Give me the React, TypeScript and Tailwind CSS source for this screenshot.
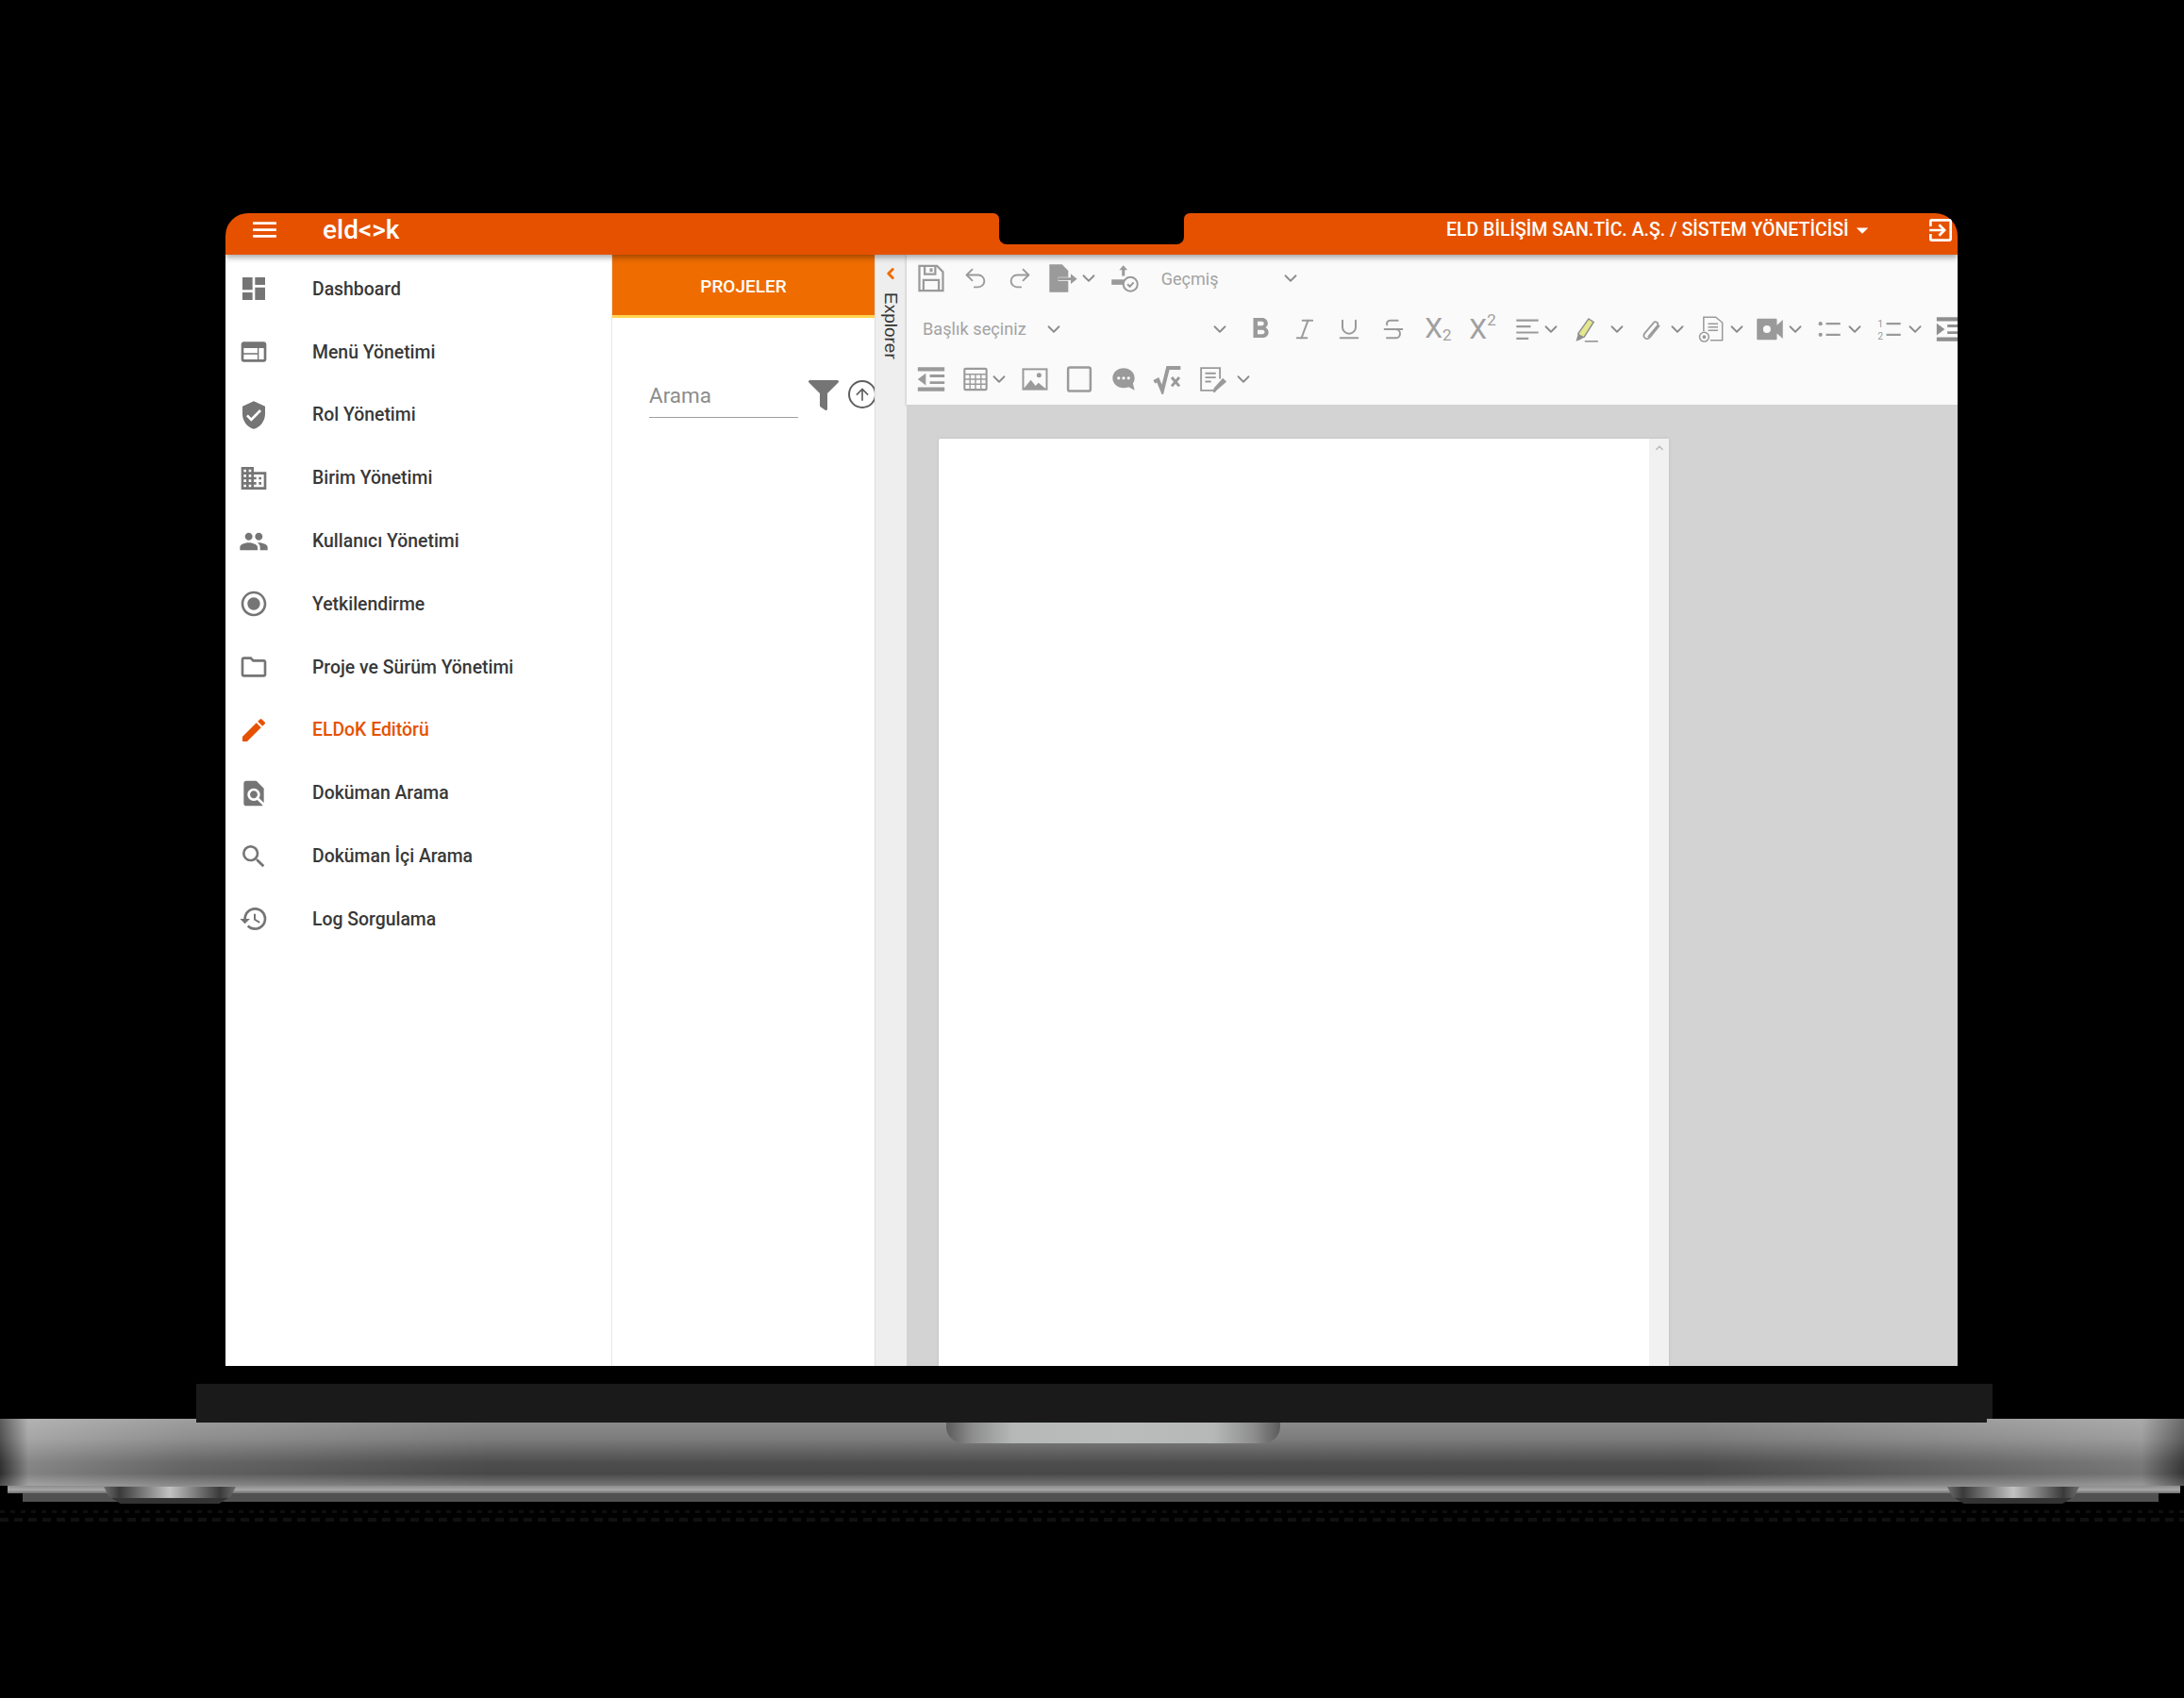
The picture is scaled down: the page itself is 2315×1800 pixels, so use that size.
import React from 'react';
import {
  MdDashboard, MdWeb, MdVerifiedUser, MdDomain, MdPeople, MdRadioButtonChecked, MdOutlineFolder,
  MdEdit, MdFindInPage, MdSearch, MdHistory, MdMenu, MdOutlineExitToApp, MdArrowDropDown,
  MdFormatBold, MdArrowUpward, MdExpandLess,
} from 'react-icons/md';
import { FaFilter } from 'react-icons/fa';
import { ChevronDown, ChevronLeft, Italic, Redo2, Strikethrough, Underline, Undo2 } from 'lucide-react';

const MENU = [
  { label: 'Dashboard', icon: MdDashboard },
  { label: 'Menü Yönetimi', icon: MdWeb },
  { label: 'Rol Yönetimi', icon: MdVerifiedUser },
  { label: 'Birim Yönetimi', icon: MdDomain },
  { label: 'Kullanıcı Yönetimi', icon: MdPeople },
  { label: 'Yetkilendirme', icon: MdRadioButtonChecked },
  { label: 'Proje ve Sürüm Yönetimi', icon: MdOutlineFolder },
  { label: 'ELDoK Editörü', icon: MdEdit, active: true },
  { label: 'Doküman Arama', icon: MdFindInPage },
  { label: 'Doküman İçi Arama', icon: MdSearch },
  { label: 'Log Sorgulama', icon: MdHistory },
];

const Chev = () => <ChevronDown size={22} strokeWidth={2} className="shrink-0 text-[#8c8c8c]" />;

// toolbar glyphs the icon packages don't have
const SaveIcon = () => (
  <svg width="30" height="30" viewBox="0 0 24 24" fill="none" stroke="currentColor" strokeWidth="1.800">
    <path d="M2 1.500h15l5 5v16H2z" />
    <path d="M6.500 1.500v7h9v-7M5.500 22.500v-9h13v9" />
    <path d="M12 3.500v3" strokeWidth="2.400" />
  </svg>
);

const DocArrowIcon = () => (
  <svg width="32" height="32" viewBox="0 0 24 24" fill="currentColor">
    <path d="M1 1h10l5 5v5H8v3h8v9H1z" />
    <path d="M8 11.500h10V8.500l5 4-5 4v-3H8z" />
  </svg>
);

const PublishIcon = () => (
  <svg width="30" height="32" viewBox="0 0 24 24" fill="none" stroke="currentColor" strokeWidth="1.600">
    <path d="M11 1l-3.500 4h2.300v5h2.400V5h2.300z" fill="currentColor" stroke="none" />
    <path d="M1 13h13v4.500H1z" fill="currentColor" stroke="none" />
    <circle cx="17" cy="17" r="6" fill="#fafafa" />
    <path d="M14.500 17l2 2 3.200-3.500" />
  </svg>
);

const AlignIcon = () => (
  <svg width="28" height="28" viewBox="0 0 24 24" stroke="currentColor" strokeWidth="1.800">
    <path d="M2 4h20M2 9.500h13M2 15h20M2 20.500h11" />
  </svg>
);

const HighlightIcon = () => (
  <svg width="28" height="30" viewBox="0 0 24 24">
    <path d="M5 16L14.500 2.500l4.500 3L10.500 19l-3.500 1z" fill="#e4e88e" stroke="#8f8f8f" strokeWidth="1.300" />
    <path d="M5 16l5.500 3-3.500 2.500L3 23z" fill="#8f8f8f" />
    <path d="M11 23h12" stroke="#8f8f8f" strokeWidth="1.300" />
  </svg>
);

const LinkIcon = () => (
  <svg width="26" height="28" viewBox="0 0 24 24" fill="none" stroke="currentColor" strokeWidth="1.600">
    <path d="M9 20l8-12c1.500-2.500-2.500-5-4-2.500L5.500 16.500C3 20.500 8 24 11 20l8-12.500" transform="rotate(6 12 12)" />
  </svg>
);

const DocPlusIcon = () => (
  <svg width="28" height="32" viewBox="0 0 24 24" fill="none" stroke="currentColor" strokeWidth="1.300">
    <path d="M5 14V1h11l6 5v16H11" />
    <path d="M9 7h9M9 10h9M9 13h9" />
    <circle cx="5.500" cy="19" r="4.200" />
    <circle cx="5.500" cy="19" r="1" fill="currentColor" />
  </svg>
);

const VideoIcon = () => (
  <svg width="32" height="30" viewBox="0 0 24 24">
    <path d="M2 3h15c.6 0 1 .4 1 1v4.500l5-4.500v16l-5-4.500V20c0 .6-.4 1-1 1H2c-.6 0-1-.4-1-1V4c0-.6.4-1 1-1z" fill="currentColor" />
    <circle cx="9.500" cy="12" r="3.200" fill="#fafafa" />
  </svg>
);

const BulletIcon = () => (
  <svg width="28" height="28" viewBox="0 0 24 24" fill="currentColor" stroke="currentColor">
    <circle cx="4" cy="7" r="1.800" stroke="none" />
    <circle cx="4" cy="17" r="1.800" stroke="none" />
    <path d="M9 7h13M9 17h13" strokeWidth="1.800" />
  </svg>
);

const NumberIcon = () => (
  <svg width="28" height="28" viewBox="0 0 24 24" fill="currentColor">
    <text x="1" y="10" fontSize="9" fontFamily="Roboto, sans-serif">1</text>
    <text x="1" y="21" fontSize="9" fontFamily="Roboto, sans-serif">2</text>
    <path d="M9 7h13M9 17h13" stroke="currentColor" strokeWidth="1.800" />
  </svg>
);

const IndentIcon = ({ outdent }: { outdent?: boolean }) => (
  <svg width="34" height="34" viewBox="0 0 24 24" fill="currentColor">
    <path d="M2 3h20v3H2zM2 18h20v3H2z" />
    {outdent ? (
      <path d="M11 8.500h11v2H11zM11 13.500h11v2H11zM2 12l6-4.500v9z" />
    ) : (
      <path d="M2 7.500l6 4.500-6 4.500zM10 8.500h12v2H10zM10 13.500h12v2H10z" />
    )}
  </svg>
);

const TableIcon = () => (
  <svg width="28" height="30" viewBox="0 0 24 24" fill="none" stroke="currentColor" strokeWidth="1.200">
    <rect x="2" y="2.500" width="20" height="19" rx="1" strokeWidth="1.800" />
    <path d="M2 7.500h20M2 12h20M2 16.500h20M7 7.500v14M12 7.500v14M17 7.500v14" />
  </svg>
);

const ImageIcon = () => (
  <svg width="30" height="30" viewBox="0 0 24 24" stroke="currentColor" strokeWidth="1.600" fill="none">
    <rect x="2" y="3.500" width="20" height="17" />
    <circle cx="15.500" cy="8.500" r="2" fill="currentColor" stroke="none" />
    <path d="M2.500 20l6-7.500 4 5 2.500-2.500 6 5z" fill="currentColor" stroke="none" />
  </svg>
);

const SquareIcon = () => (
  <svg width="30" height="30" viewBox="0 0 24 24" fill="none" stroke="currentColor" strokeWidth="2">
    <rect x="2.500" y="2" width="19" height="20" rx="1.500" />
  </svg>
);

const CommentIcon = () => (
  <svg width="28" height="28" viewBox="0 0 24 24" fill="currentColor">
    <path d="M12 2c5.500 0 10 3.800 10 9 0 1.800-.5 3.400-1.500 4.800L22 22l-5.500-3c-1.400.6-2.900 1-4.500 1C6.500 20 2 16 2 11s4.500-9 10-9z" />
    <circle cx="7.500" cy="11" r="1.400" fill="#fafafa" />
    <circle cx="12" cy="11" r="1.400" fill="#fafafa" />
    <circle cx="16.500" cy="11" r="1.400" fill="#fafafa" />
  </svg>
);

const SqrtIcon = () => (
  <svg width="34" height="32" viewBox="0 0 24 24" fill="none" stroke="currentColor" strokeWidth="3">
    <path d="M1 14l3-1.500 3.500 8.500L12 3h10" />
    <path d="M15 10.500l6 7M21 10.500l-6 7" strokeWidth="2.200" />
  </svg>
);

const NotesIcon = () => (
  <svg width="30" height="30" viewBox="0 0 24 24" fill="none" stroke="currentColor" strokeWidth="1.500">
    <path d="M14 21.500H2.500v-19h16v9" />
    <path d="M6 7h9M6 10.500h9M6 14h5" />
    <path d="M15 21l-1.500 2 .5-3 7-8 2 2z" fill="currentColor" />
  </svg>
);

const TextIcon = ({ sub, sup }: { sub?: boolean; sup?: boolean }) => (
  <span className="flex items-start text-[30px] font-normal leading-none text-[#a0a0a0]">
    X
    {sub && <span className="mt-[14px] text-[17px]">2</span>}
    {sup && <span className="mt-[-3px] text-[17px]">2</span>}
  </span>
);

const Btn = ({ children }: { children: React.ReactNode }) => (
  <div className="flex h-full w-[47.200px] shrink-0 items-center justify-center text-[#9a9a9a]">{children}</div>
);

const Toolbar = () => (
  <div className="flex h-[159px] shrink-0 flex-col overflow-hidden bg-[#fafafa] shadow-[0_1px_3px_rgba(0,0,0,0.25)]">
    <div className="flex h-[50px] shrink-0 items-center pl-[2px]">
      <Btn><SaveIcon /></Btn>
      <Btn><Undo2 size={28} strokeWidth={1.600} /></Btn>
      <Btn><Redo2 size={28} strokeWidth={1.600} /></Btn>
      <div className="flex h-full w-[64px] shrink-0 items-center pl-[6px] text-[#9a9a9a]"><DocArrowIcon /><Chev /></div>
      <Btn><PublishIcon /></Btn>
      <span className="ml-[15px] w-[126px] shrink-0 text-[18px] text-[#a3a3a3]">Geçmiş</span>
      <Chev />
    </div>
    <div className="flex h-[57px] shrink-0 items-center pl-[17px]">
      <span className="w-[128px] shrink-0 text-[18.200px] text-[#a3a3a3]">Başlık seçiniz</span>
      <Chev />
      <span className="w-[154px] shrink-0" />
      <Chev />
      <span className="w-[8px] shrink-0" />
      <Btn><MdFormatBold size={36} /></Btn>
      <Btn><Italic size={28} strokeWidth={1.700} /></Btn>
      <Btn><Underline size={28} strokeWidth={1.700} /></Btn>
      <Btn><Strikethrough size={28} strokeWidth={1.700} /></Btn>
      <Btn><TextIcon sub /></Btn>
      <Btn><TextIcon sup /></Btn>
      <div className="flex h-full w-[62px] shrink-0 items-center pl-[10px] text-[#9a9a9a]"><AlignIcon /><Chev /></div>
      <div className="flex h-full w-[70px] shrink-0 items-center gap-[8px] pl-[10px] text-[#9a9a9a]"><HighlightIcon /><Chev /></div>
      <div className="flex h-full w-[64px] shrink-0 items-center gap-[3px] pl-[11px] text-[#9a9a9a]"><LinkIcon /><Chev /></div>
      <div className="flex h-full w-[62px] shrink-0 items-center gap-[2px] pl-[9px] text-[#9a9a9a]"><DocPlusIcon /><Chev /></div>
      <div className="flex h-full w-[63px] shrink-0 items-center pl-[7px] text-[#9a9a9a]"><VideoIcon /><Chev /></div>
      <div className="flex h-full w-[64px] shrink-0 items-center gap-[2px] pl-[9px] text-[#9a9a9a]"><BulletIcon /><Chev /></div>
      <div className="flex h-full w-[62px] shrink-0 items-center gap-[2px] pl-[9px] text-[#9a9a9a]"><NumberIcon /><Chev /></div>
      <div className="flex h-full shrink-0 items-center pl-[8px] text-[#8f8f8f]"><IndentIcon /></div>
    </div>
    <div className="flex h-[50px] shrink-0 items-center pl-[2px]">
      <Btn><IndentIcon outdent /></Btn>
      <div className="flex h-full w-[69px] shrink-0 items-center pl-[10px] text-[#9a9a9a]"><TableIcon /><Chev /></div>
      <div className="flex h-full w-[36px] shrink-0 items-center justify-center text-[#9a9a9a]"><ImageIcon /></div>
      <span className="w-[5px] shrink-0" />
      <Btn><SquareIcon /></Btn>
      <Btn><CommentIcon /></Btn>
      <Btn><SqrtIcon /></Btn>
      <div className="flex h-full shrink-0 items-center gap-[7px] pl-[8px] text-[#9a9a9a]"><NotesIcon /><Chev /></div>
    </div>
  </div>
);

const Sidebar = () => (
  <aside className="h-full w-[410px] shrink-0 border-r border-[#e8e8e8] bg-white pt-[3px]">
    {MENU.map(item => {
      const Icon = item.icon;
      return (
        <div key={item.label} className="flex h-[66.800px] items-center pl-[14px]">
          <Icon size={32} className={item.active ? 'text-[#e65100]' : 'text-[#757575]'} />
          <span className={`ml-[46px] text-[19.400px] font-medium ${item.active ? 'text-[#e65100]' : 'text-[#383838]'}`}>{item.label}</span>
        </div>
      );
    })}
  </aside>
);

const ProjectPanel = () => (
  <section className="h-full w-[278px] shrink-0 bg-white">
    <div className="flex h-[67px] items-center justify-center border-b-[3px] border-[#ffd54f] bg-[#ef6c00] pt-[4px] text-[19px] font-medium text-white">
      PROJELER
    </div>
    <div className="mt-[65px] flex items-start pl-[39px]">
      <div className="h-[41px] w-[158px] shrink-0 border-b border-[#9e9e9e] pt-[1px] text-[22.500px] text-[#8c8c8c]">Arama</div>
      <FaFilter size={32} className="ml-[11px] mt-[1px] shrink-0 text-[#757575]" />
      <span className="ml-[10px] mt-[1px] flex h-[30px] w-[30px] shrink-0 items-center justify-center rounded-full border-2 border-[#5f5f5f] text-[#5f5f5f]">
        <MdArrowUpward size={20} />
      </span>
    </div>
  </section>
);

const ExplorerTab = () => (
  <div className="flex h-full w-[34px] shrink-0 flex-col items-center border-l border-[#dddddd] bg-[#eeeeee] pt-[11px] pr-[2px]">
    <ChevronLeft size={18} strokeWidth={4} className="text-[#ef6c00]" />
    <span className="mt-[11px] font-[Liberation_Sans,sans-serif] text-[19px] text-[#333333] [writing-mode:vertical-rl]">Explorer</span>
  </div>
);

const Editor = () => (
  <div className="flex h-full min-w-0 flex-1 flex-col">
    <Toolbar />
    <div className="min-h-0 flex-1 overflow-hidden bg-[#d3d3d3] pl-[34px] pt-[36px]">
      <div className="flex h-full w-[774px] justify-end rounded-t-[2px] bg-white shadow-[0_0_3px_rgba(0,0,0,0.12)]">
        <div className="flex h-full w-[21px] justify-center bg-[#f1f1f1]">
          <MdExpandLess size={16} className="mt-[2px] text-[#b5b5b5]" />
        </div>
      </div>
    </div>
  </div>
);

const Header = () => (
  <header className="relative z-10 flex h-[44px] text-white shadow-[0_3px_6px_rgba(0,0,0,0.35)]">
    <div className="flex w-[820px] items-center rounded-tl-[24px] rounded-tr-[6px] bg-[#e65100] pb-[9px] pl-[25px]">
      <MdMenu size={33} />
      <span className="ml-[45px] text-[28px] font-medium leading-none">eld&lt;&gt;k</span>
    </div>
    <div className="w-[196px] bg-[#e65100]">
      <div className="h-[33px] rounded-b-[8px] bg-black" />
    </div>
    <div className="flex flex-1 items-center rounded-tl-[6px] rounded-tr-[24px] bg-[#e65100] pb-[9px] pl-[278px]">
      <span className="whitespace-nowrap text-[19.500px] font-medium">ELD BİLİŞİM SAN.TİC. A.Ş. / SİSTEM YÖNETİCİSİ</span>
      <MdArrowDropDown size={30} className="ml-[-1px]" />
      <MdOutlineExitToApp size={32} className="ml-[52px]" />
    </div>
  </header>
);

const Foot = ({ className }: { className: string }) => (
  <div className={`absolute top-[-7px] h-[18px] w-[140px] bg-[linear-gradient(180deg,transparent_68%,#333333_68%),linear-gradient(90deg,#6d6d6d,#3a3a3a_12%,#7a7a7a_30%,#c2c2c2_50%,#7a7a7a_70%,#3a3a3a_88%,#6d6d6d)] [clip-path:polygon(0_0,100%_0,96%_60%,87%_100%,13%_100%,4%_60%)] ${className}`} />
);

const LaptopBase = () => (
  <div className="relative mt-[56px]">
    {/* hinge strip and notch sit over the silver body */}
    <div className="absolute left-[208px] top-[-37px] z-10 h-[37px] w-[1904px] bg-[#1a1a1a]" />
    <div className="absolute left-[208px] top-0 z-10 h-[4px] w-[1898px] bg-[#1a1a1a]" />
    <div className="absolute left-[1003px] top-[4px] z-10 h-[22px] w-[354px] rounded-b-[18px] bg-[linear-gradient(90deg,#5c5c5c,#8e8e8e_8%,#b6b8b8_20%,#bbbdbd_50%,#b6b8b8_80%,#8e8e8e_92%,#5c5c5c)]" />
    <div className="h-[71px] bg-[linear-gradient(90deg,rgba(0,0,0,0.35)_0,rgba(255,255,255,0.32)_30px,rgba(255,255,255,0.14)_200px,transparent_520px,transparent_1800px,rgba(255,255,255,0.12)_2050px,rgba(255,255,255,0.25)_2270px,rgba(0,0,0,0.25)_100%),linear-gradient(180deg,#8e8e8e,#7c7c7c_30%,#4e4e4e_65%,#484848_82%,#787878_100%)]" />
    <div className="ml-[8px] mr-[4px] h-[8px] bg-[linear-gradient(180deg,#8c8c8c,#a6a6a6_55%,#6e6e6e)]" />
    <div className="relative ml-[24px] mr-[27px] h-[9px] bg-[#505050]">
      <Foot className="left-[86px]" />
      <Foot className="left-[2040px]" />
    </div>
    <div className="mt-[9px] h-[3px] bg-[repeating-linear-gradient(90deg,#0f0f0f_0,#0f0f0f_5px,transparent_5px,transparent_11px)]" />
    <div className="mt-[5px] h-[4px] bg-[repeating-linear-gradient(90deg,#101010_0,#101010_9px,transparent_9px,transparent_15px)]" />
  </div>
);

const App: React.FC = () => (
  <div className="h-[1800px] overflow-hidden bg-black pt-[226px] font-[Roboto,sans-serif]">
    <div className="ml-[239px] flex h-[1222px] w-[1836px] flex-col">
      <Header />
      <div className="flex min-h-0 flex-1">
        <Sidebar />
        <ProjectPanel />
        <ExplorerTab />
        <Editor />
      </div>
    </div>
    <LaptopBase />
  </div>
);

export default App;
